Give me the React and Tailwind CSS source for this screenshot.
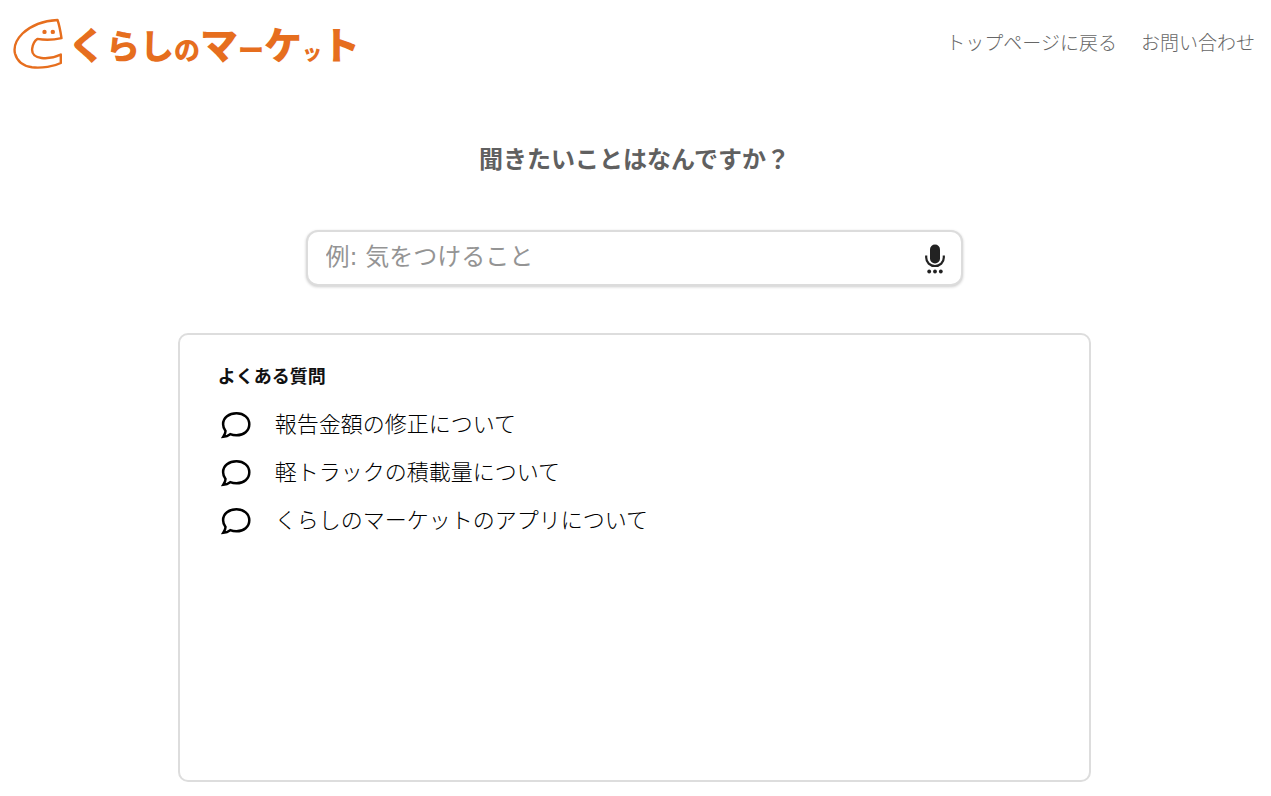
const questions = [
  '報告金額の修正について',
  '軽トラックの積載量について',
  'くらしのマーケットのアプリについて',
];

function Logo() {
  return (
    <a href="/" className="flex items-center text-[#e66e1e]">
      <svg viewBox="0 0 52 54" className="h-[54px] w-[52px]" fill="none" stroke="currentColor" strokeWidth="2.400" strokeLinejoin="round" aria-hidden="true">
        <path d="M45.500 4C31 4.800 19 9.500 10.500 17.500C4 24 1.500 31 3 37.500C5 45 11 50 20 51.300C30 52.300 42 50.500 48.800 47L48.800 38.500C43 41.300 36 42.800 29.500 42C22.500 41 19.500 37.500 20.200 32.500C20.800 28 22.500 24.800 25.300 22.900C33 24.200 42 23.800 49.500 22.200C48.500 15.500 47.500 9.500 45.500 4Z" />
        <circle cx="32.500" cy="15.900" r="2.200" fill="currentColor" stroke="none" />
        <circle cx="40.800" cy="15.900" r="2.200" fill="currentColor" stroke="none" />
      </svg>
      <span className="flex items-end pl-1 leading-none font-black">
        <span className="text-[38px]">く</span>
        <span className="text-[34px]">ら</span>
        <span className="text-[34px]">し</span>
        <span className="text-[26px]">の</span>
        <span className="text-[38px]">マ</span>
        <span className="text-[26px]">ー</span>
        <span className="text-[38px]">ケ</span>
        <span className="text-[20px]">ッ</span>
        <span className="text-[38px]">ト</span>
      </span>
    </a>
  );
}

function MicIcon() {
  return (
    <svg viewBox="0 0 20 30" className="h-[30px] w-5" fill="#222222" aria-hidden="true">
      <rect x="5" y="0.500" width="10" height="19" rx="5" />
      <path d="M1.200 11.500V13.500C1.200 18.500 5 22 10 22S18.800 18.500 18.800 13.500V11.500" fill="none" stroke="#222222" strokeWidth="2.200" />
      <circle cx="4.200" cy="27.500" r="1.900" />
      <circle cx="10" cy="27.500" r="1.900" />
      <circle cx="15.800" cy="27.500" r="1.900" />
    </svg>
  );
}

function BubbleIcon() {
  return (
    <svg viewBox="0 0 30 28" className="h-7 w-[30px] shrink-0" fill="none" stroke="#000000" strokeWidth="2.500" strokeLinejoin="miter" aria-hidden="true">
      <path d="M15.500 2.300C22.800 2.300 28.300 6.800 28.300 13.200C28.300 19.800 22.800 24.300 15.500 24.300C13.200 24.300 11 23.900 9.200 23.200C7.200 24.700 4.800 25.600 2.300 25.800C3.600 23.900 4.500 21.800 4.500 19.900C3 18 2.100 15.800 2.100 13.200C2.100 6.800 8 2.300 15.500 2.300Z" />
    </svg>
  );
}

export default function App() {
  return (
    <div className="min-h-screen bg-white pr-0.5 pb-3.5 font-['Noto_Sans_CJK_JP',sans-serif]">
      <header className="flex items-center justify-between px-3 pt-4">
        <Logo />
        <nav className="flex gap-6 pr-0.5 pb-0.5 text-[19px] leading-7 font-light text-[#666666]">
          <a href="/">トップページに戻る</a>
          <a href="/contact">お問い合わせ</a>
        </nav>
      </header>

      <main className="mx-auto mt-[70px] w-[72%]">
        <h1 className="text-center text-2xl leading-9 font-bold text-[#606060]">
          <label htmlFor="question">聞きたいことはなんですか？</label>
        </h1>

        <form className="mx-auto mt-[54px] flex h-14 w-[72%] items-center rounded-xl border-2 border-[#dcdcdc] bg-white pr-4 pl-[18px] shadow-[0_1px_3px_rgba(0,0,0,0.2)]">
          <input
            id="question"
            type="text"
            placeholder="例: 気をつけること"
            className="h-full min-w-0 flex-1 pb-0.5 font-['DejaVu_Sans','Noto_Sans_CJK_JP',sans-serif] text-2xl text-[#222222] outline-none placeholder:text-[#949494]"
          />
          <button type="button" aria-label="音声入力" className="pt-0.5">
            <MicIcon />
          </button>
        </form>

        <section className="mt-[47px] min-h-[449px] rounded-[10px] border-2 border-[#dddddd] px-[38px] pt-[26px]">
          <h2 className="text-lg leading-7 font-bold text-[#111111]">よくある質問</h2>
          <ul className="mt-[9px]">
            {questions.map((question) => (
              <li key={question}>
                <a href="#question" className="flex h-12 items-center gap-6 pl-[3px] text-[22px] font-light text-black">
                  <span className="pt-1.5">
                    <BubbleIcon />
                  </span>
                  {question}
                </a>
              </li>
            ))}
          </ul>
        </section>
      </main>
    </div>
  );
}
